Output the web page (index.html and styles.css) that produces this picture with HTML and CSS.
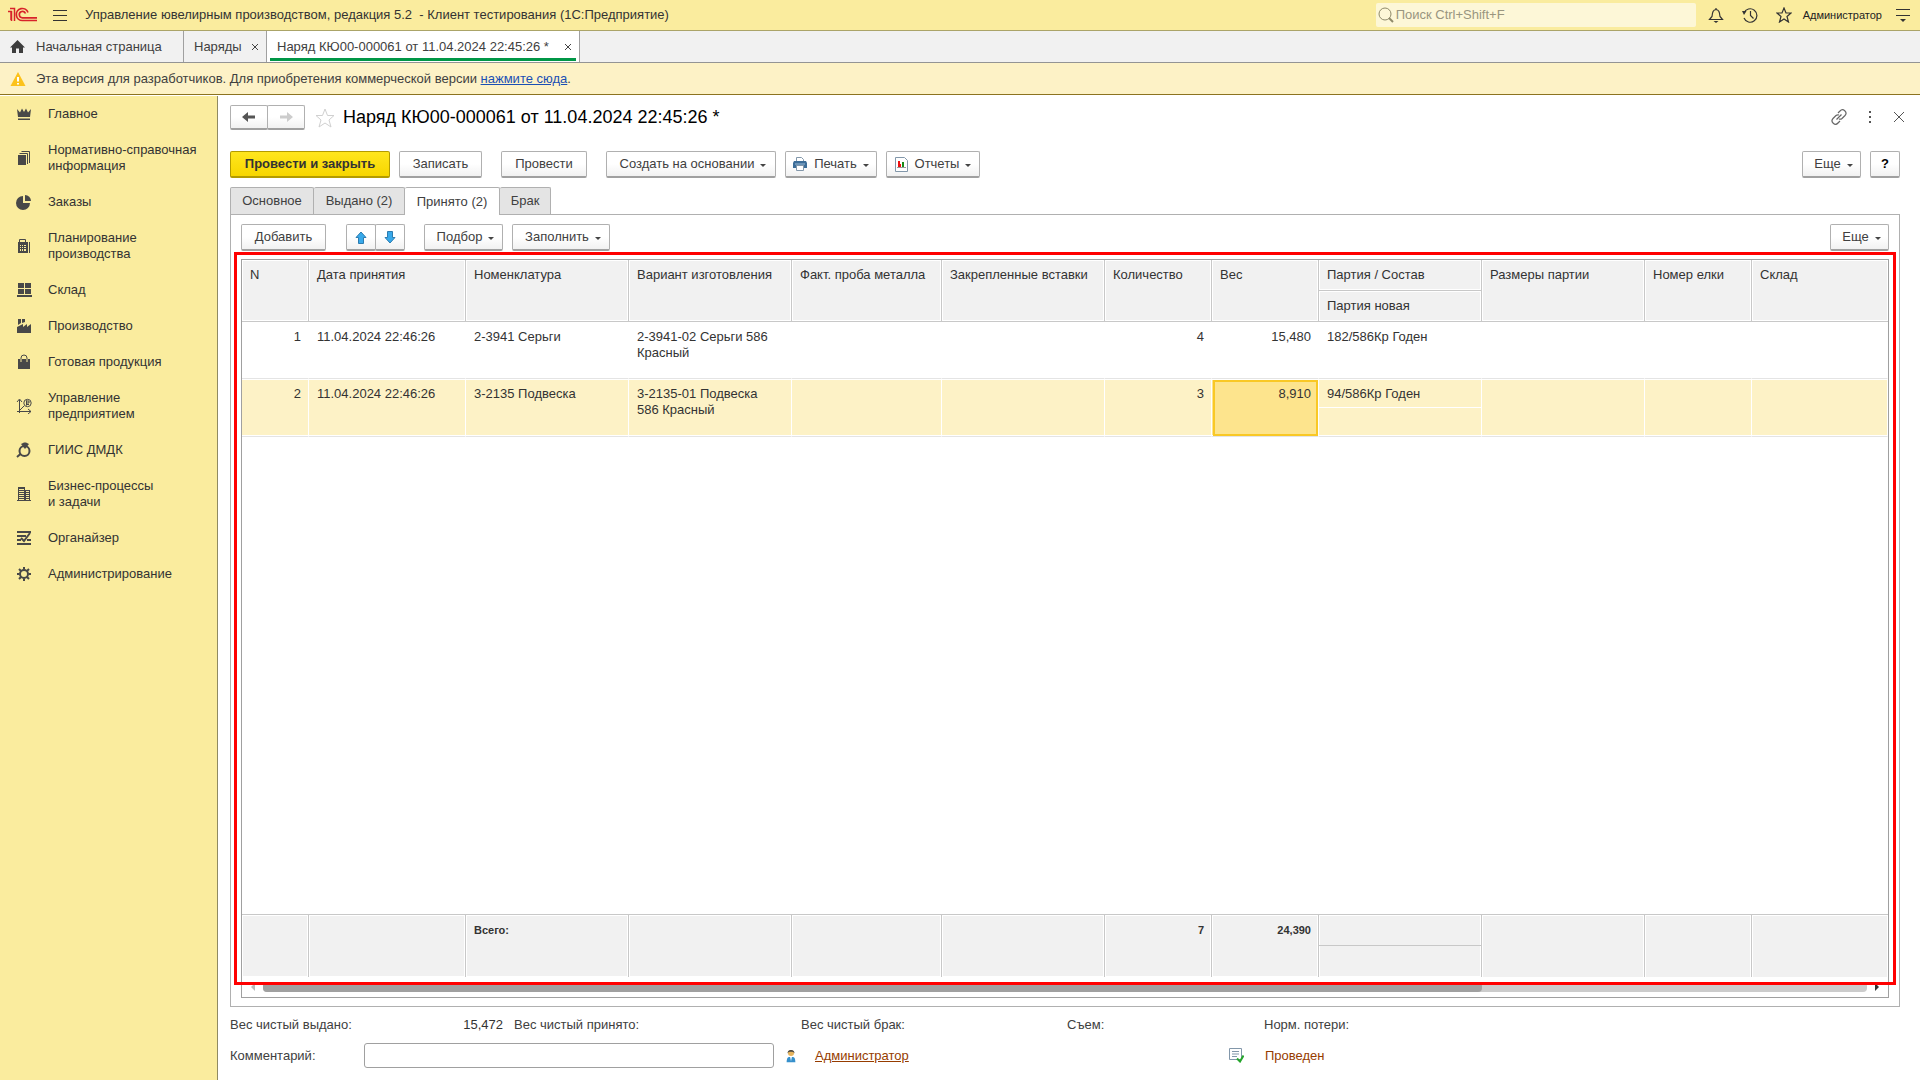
FILE: index.html
```html
<!DOCTYPE html>
<html lang="ru">
<head>
<meta charset="utf-8">
<title>Управление ювелирным производством</title>
<link rel="stylesheet" href="styles.css">
</head>
<body>
<header class="titlebar">
  <svg class="logo" width="30" height="16" viewBox="0 0 30 16" fill="none" stroke="#d8232a"><path d="M0 4.500h3V13M2 1.500h4.500V14M3.500 4v10" stroke-width="1.500"/><path d="M20 5.500A6 6 0 1 0 14.500 13.500H29M17.500 6.500a3.200 3.200 0 1 0-3 4.300H29" stroke-width="1.700"/></svg>
  <button class="icon-btn menu" aria-label="Меню"><svg width="14" height="13" stroke="#333" stroke-width="1"><path d="M0 1.500h14M0 6.500h14M0 11.500h14"/></svg></button>
  <div class="app-name">Управление ювелирным производством, редакция 5.2 &nbsp;- Клиент тестирования (1С:Предприятие)</div>
  <div class="search">
    <svg width="16" height="16" fill="none" stroke="#8f8a6a"><circle cx="7" cy="7" r="6"/><path d="M11 11l4 4" stroke-width="2"/></svg>
    <input type="text" placeholder="Поиск Ctrl+Shift+F" aria-label="Поиск">
  </div>
  <div class="tools">
    <button class="icon-btn" aria-label="Уведомления"><svg width="16" height="16" fill="none" stroke="#333" stroke-width="1.200"><path d="M1.500 12.500h13L12 9.500C11.500 5 11 3 8 2.500 5 3 4.500 5 4 9.500zM8 2.500V1"/><path d="M5.500 14h5L8 16z" fill="#333" stroke="none"/></svg></button>
    <button class="icon-btn" aria-label="История"><svg width="16" height="16" fill="none" stroke="#333" stroke-width="1.200"><path d="M2 6a6.700 6.700 0 1 1 0 5M8.500 4v4.500l3 3"/><path d="M0 4l4.500 0L2 8z" fill="#333" stroke="none"/></svg></button>
    <button class="icon-btn" aria-label="Избранное"><svg width="16" height="16" fill="none" stroke="#333" stroke-width="1.200"><path d="M8 1l2 5h5l-4 3.500 1.500 5.500L8 12l-4.500 3L5 9.500 1 6h5z"/></svg></button>
    <a class="user" href="#">Администратор</a>
    <button class="icon-btn" aria-label="Настройки"><svg width="14" height="14" stroke="#333"><path d="M0 1.500h14M0 7.500h14"/><path d="M4 11h6l-3 3z" fill="#333" stroke="none"/></svg></button>
  </div>
</header>
<nav class="doc-tabs">
  <a class="doc-tab home" href="#"><svg width="15" height="14" fill="#3d3d3d"><path d="M7.500 0L15 7.500H13V13H9V8.500H6V13H2V7.500H0z"/></svg>Начальная страница</a>
  <a class="doc-tab list" href="#">Наряды<svg class="x" width="8" height="8" stroke="#444"><path d="M1 1l6 6M7 1L1 7"/></svg></a>
  <a class="doc-tab active" href="#">Наряд КЮ00-000061 от 11.04.2024 22:45:26 *<svg class="x" width="8" height="8" stroke="#444"><path d="M1 1l6 6M7 1L1 7"/></svg></a>
</nav>
<div class="notice">
  <svg width="16" height="14"><path d="M8 0l7.500 14H.5z" fill="#fcc21b"/><path d="M8 5v4.500M8 11v1.500" stroke="#fff" stroke-width="2"/></svg>
  <p>Эта версия для разработчиков. Для приобретения коммерческой версии <a href="#">нажмите сюда</a>.</p>
</div>
<div class="body">
  <nav class="sidebar">
    <a href="#"><svg width="16" height="16"><path d="M1 3l3 3.500L6 2.500l2 3.500 2-3.500 2 4L15 3l-1 8H2zM2 12.500h12V14H2z"/></svg>Главное</a>
    <a href="#"><svg width="16" height="16"><path d="M2 5h8v10H2z"/><path d="M3.500 3.500h8V14M5.500 1.500h8V13" class="ln"/></svg>Нормативно-справочная информация</a>
    <a href="#"><svg width="16" height="16"><path d="M7 2v7h7A7 7 0 1 1 7 2zM9 1a6 6 0 0 1 6 6H9z"/></svg>Заказы</a>
    <a href="#"><svg width="16" height="16"><path d="M3.500 5V1.500h6V5M13.500 4v11" class="ln"/><path fill-rule="evenodd" d="M2 4h10v11H2zM4 7v1h1V7zM6 7v1h1V7zM8 7v1h2V7zM4 9v1h1V9zM6 9v1h1V9zM8 9v1h2V9zM4 11v2h1v-2zM6 11v2h1v-2zM8 11v2h2v-2z"/></svg>Планирование производства</a>
    <a href="#"><svg width="16" height="16"><path d="M2 1h6v5H2zM9 1h6v5H9zM2 7h6v5H2zM9 7h6v5H9zM1 13h15v2H1z"/></svg>Склад</a>
    <a href="#"><svg width="16" height="16"><path d="M1 15V9l6-3v3l4-3v3l4-3v9zM2 1h3v4l-3 2zM6 1h3v3L6 5z"/></svg>Производство</a>
    <a href="#"><svg width="16" height="16"><path d="M2 5h12v10H2z"/><path d="M5 8V4a3 3 0 0 1 6 0v4" class="ln" style="stroke:#faec9e"/><path d="M5 5V4a3 3 0 0 1 6 0v1" class="ln"/></svg>Готовая продукция</a>
    <a href="#"><svg width="16" height="16"><path d="M3.500 15V2M1 4l2.500-3L6 4M1 13.500h14M12 11l3 2.500-3 2.500M4 12l4-4" class="ln"/><circle cx="11.500" cy="5" r="3.700" class="ln"/><path d="M10.500 2.500v5M10 3h3v2h-3M10 6.500h3" class="ln"/></svg>Управление предприятием</a>
    <a href="#"><svg width="16" height="16"><circle cx="8.500" cy="9" r="5" class="ln bold"/><path d="M5 2l3-1.500h2L13 2 9 7z"/><path d="M1 15l4-3.500" class="ln bold"/></svg>ГИИС ДМДК</a>
    <a href="#"><svg width="16" height="16"><path d="M2 1h7v3h5v10h1v1H1v-1h1z"/><path d="M3 3.500h5M3 5.500h5M3 7.500h5M3 9.500h5M3 11.500h5M3 13.500h5M10 5.500h3M10 7.500h3M10 9.500h3M10 11.500h3M10 13.500h3" class="gap"/></svg>Бизнес-процессы<br>и задачи</a>
    <a href="#"><svg width="16" height="16"><path d="M1 2h14M1 6h9M1 10h4M11 10h4M1 14h14M5 8l3 3 6-8" class="ln bold"/></svg>Органайзер</a>
    <a href="#"><svg width="16" height="16"><circle cx="8" cy="8" r="4" class="ln bold"/><path d="M8 1v2.500M8 12.500V15M1 8h2.500M12.500 8H15M3 3l2 2M11 11l2 2M13 3l-2 2M5 11l-2 2" class="ln bold"/></svg>Администрирование</a>
  </nav>
  <main class="page">
    <div class="page-head">
      <div class="pair">
        <button class="btn nav" aria-label="Назад"><svg width="16" height="12"><path d="M1 6l6-5v3.500h7v3H7V11z" fill="#555"/></svg></button>
        <button class="btn nav" aria-label="Вперед"><svg width="16" height="12"><path d="M15 6L9 1v3.500H2v3h7V11z" fill="#ccc"/></svg></button>
      </div>
      <svg class="fav" width="20" height="20" fill="none" stroke="#d0d0d0"><path d="M10 1l2.500 6.500H19l-5 4.500 2 7-6-4-6 4 2-7-5-4.500h6.500z"/></svg>
      <h1>Наряд КЮ00-000061 от 11.04.2024 22:45:26 *</h1>
      <div class="head-tools">
        <button class="icon-btn" aria-label="Ссылка"><svg width="16" height="16" fill="none" stroke="#666" stroke-width="1.200"><path d="M7 4l2-2a3 3 0 0 1 5 4.500l-3 3a3 3 0 0 1-3 .5M9 12l-2 2a3 3 0 0 1-5-4.500l3-3A3 3 0 0 1 8 6M5.500 10.500l5-5"/></svg></button>
        <button class="icon-btn" aria-label="Действия"><svg width="4" height="12" fill="#555"><path d="M1 0h2v2H1zM1 5h2v2H1zM1 10h2v2H1z"/></svg></button>
        <button class="icon-btn" aria-label="Закрыть"><svg width="12" height="12" stroke="#555"><path d="M1 1l10 10M11 1L1 11"/></svg></button>
      </div>
    </div>
    <div class="commands">
      <button class="btn primary">Провести и закрыть</button>
      <button class="btn save">Записать</button>
      <button class="btn post">Провести</button>
      <button class="btn drop base">Создать на основании<i class="caret"></i></button>
      <button class="btn drop print"><svg width="14" height="16"><path d="M3.500 6V1.500h5l2 2V6" fill="#fff" stroke="#8297aa"/><path d="M1 5h12l1 2v5H0V7z" fill="#3c6d98"/><path d="M2 8h10" stroke="#9dbdd8"/><path d="M3.500 9.500h7v5h-7z" fill="#fff" stroke="#8297aa"/></svg>Печать<i class="caret"></i></button>
      <button class="btn drop reports"><svg width="13" height="15"><path d="M.5.5h9l3 3v11H.5z" fill="#fff" stroke="#8297aa"/><path d="M3 4h2v6H3zM5 7h1v3H5z" fill="#e11"/><path d="M7 5h2v5H7z" fill="#198a19"/><path d="M2 10.500h9" stroke="#999"/></svg>Отчеты<i class="caret"></i></button>
      <button class="btn drop more push">Еще<i class="caret"></i></button>
      <button class="btn help">?</button>
    </div>
    <div class="form-tabs" role="tablist">
      <button role="tab" class="t-main">Основное</button><button role="tab" class="t-out">Выдано (2)</button><button role="tab" class="t-in active" aria-selected="true">Принято (2)</button><button role="tab" class="t-bad">Брак</button>
    </div>
    <section class="panel">
      <div class="panel-tools">
        <button class="btn add">Добавить</button>
        <div class="pair">
          <button class="btn arrow" aria-label="Вверх"><svg width="12" height="13"><path d="M6 1l5 5.500H8.500v6h-5v-6H1z" fill="#38a9ea" stroke="#2c7cb0"/></svg></button>
          <button class="btn arrow" aria-label="Вниз"><svg width="12" height="13"><path d="M6 12L1 6.500h2.500v-6h5v6H11z" fill="#38a9ea" stroke="#2c7cb0"/></svg></button>
        </div>
        <button class="btn drop pick">Подбор<i class="caret"></i></button>
        <button class="btn drop fill">Заполнить<i class="caret"></i></button>
        <button class="btn drop more push">Еще<i class="caret"></i></button>
      </div>
      <div class="grid-box">
        <table>
          <colgroup><col class="c-n"><col class="c-date"><col class="c-l"><col class="c-l"><col class="c-m"><col class="c-l"><col class="c-s"><col class="c-s"><col class="c-l"><col class="c-l"><col class="c-s"><col></colgroup>
          <thead>
            <tr><th rowspan="2">N</th><th rowspan="2">Дата принятия</th><th rowspan="2">Номенклатура</th><th rowspan="2">Вариант изготовления</th><th rowspan="2">Факт. проба металла</th><th rowspan="2">Закрепленные вставки</th><th rowspan="2">Количество</th><th rowspan="2">Вес</th><th>Партия / Состав</th><th rowspan="2">Размеры партии</th><th rowspan="2">Номер елки</th><th rowspan="2">Склад</th></tr>
            <tr><th>Партия новая</th></tr>
          </thead>
          <tbody>
            <tr class="row"><td class="num">1</td><td>11.04.2024 22:46:26</td><td>2-3941 Серьги</td><td>2-3941-02 Серьги 586 Красный</td><td></td><td></td><td class="num">4</td><td class="num">15,480</td><td>182/586Кр Годен</td><td></td><td></td><td></td></tr>
            <tr class="row selected"><td class="num">2</td><td>11.04.2024 22:46:26</td><td>3-2135 Подвеска</td><td>3-2135-01 Подвеска 586 Красный</td><td></td><td></td><td class="num">3</td><td class="num current">8,910</td><td class="split"><div>94/586Кр Годен</div></td><td></td><td></td><td></td></tr>
            <tr class="rest"><td colspan="12"></td></tr>
          </tbody>
          <tfoot>
            <tr><td></td><td></td><td>Всего:</td><td></td><td></td><td></td><td class="num">7</td><td class="num">24,390</td><td class="half"></td><td rowspan="2"></td><td rowspan="2"></td><td rowspan="2"></td></tr>
            <tr><td></td><td></td><td></td><td></td><td></td><td></td><td></td><td></td><td></td></tr>
          </tfoot>
        </table>
        <div class="scroll">
          <svg width="5" height="8" fill="#bbb"><path d="M5 0v8L1 4z"/></svg>
          <div class="track"><div class="thumb"></div></div>
          <svg width="5" height="8" fill="#333"><path d="M0 0v8l4-4z"/></svg>
        </div>
      </div>
      <div class="highlight"></div>
    </section>
    <div class="totals">
      <div>Вес чистый выдано:<output>15,472</output></div><div>Вес чистый принято:</div><div>Вес чистый брак:</div><div>Съем:</div><div>Норм. потери:</div>
    </div>
    <div class="comment">
      <label for="comment">Комментарий:</label>
      <input id="comment" type="text">
      <div class="author"><svg width="10" height="14" viewBox="0 0 10 16"><path d="M0 15c0-4 1-6 3-6h4c2 0 3 2 3 6z" fill="#3690cc"/><path d="M4 9h2l-1 5z" fill="#fff"/><circle cx="5" cy="4.500" r="3.500" fill="#e6b45e"/><path d="M1 5a4 4 0 0 1 8 0C8 3 7 3 5 3S2 3 1 5z" fill="#444"/></svg><a href="#">Администратор</a></div>
      <div class="state"><svg width="15" height="15"><path d="M.5.500h12v11H.5z" fill="#fff" stroke="#8297aa"/><path d="M3 3.500h7M3 6h7M3 8.500h5" stroke="#8297aa"/><path d="M8 10.500l3 3 3.500-6" fill="none" stroke="#25a52c" stroke-width="2"/></svg>Проведен</div>
    </div>
  </main>
</div>
</body>
</html>
```

FILE: styles.css
```css
* { box-sizing: border-box; }
body {
  margin: 0;
  min-height: 100vh;
  display: flex;
  flex-direction: column;
  background: #fff;
  color: #404040;
  font: 13px/16px "Liberation Sans", Arial, sans-serif;
}
button, input { font: inherit; color: inherit; }
svg { flex: none; display: block; }
a { color: inherit; text-decoration: none; }
p, h1 { margin: 0; }
.icon-btn { border: 0; background: none; padding: 0; display: flex; }

/* Window title */
.titlebar {
  display: flex;
  align-items: center;
  height: 31px;
  padding: 0 10px 0 8px;
  background: #faec9e;
  border-bottom: 1px solid #aba468;
}
.menu { margin: 0 18px 0 15px; }
.app-name { flex: 1; color: #333; white-space: nowrap; }
.search {
  display: flex;
  align-items: center;
  width: 320px;
  height: 24px;
  padding: 0 2px;
  border-radius: 2px;
  background: #fdf7d7;
}
.search input { flex: 1; min-width: 0; border: 0; padding: 0 2px; background: none; outline: 0; }
.search input::placeholder { color: #99957f; opacity: 1; }
.tools { display: flex; align-items: center; gap: 18px; padding-left: 12px; }
.user { font-size: 11px; color: #222; margin: 0 -4px 0 -7px; }

/* Open documents */
.doc-tabs { display: flex; height: 32px; background: #f1f1f1; border-bottom: 1px solid #949494; }
.doc-tab { display: flex; align-items: center; padding: 0 7px 0 10px; border-right: 1px solid #a0a0a0; }
.home { gap: 11px; min-width: 184px; }
.list { min-width: 83px; justify-content: space-between; }
.doc-tab.active { min-width: 313px; justify-content: space-between; background: #fff; position: relative; }
.doc-tab.active::after {
  content: "";
  position: absolute;
  left: 3px; right: 3px; bottom: 1px;
  height: 3px;
  background: #009646;
}

.notice {
  display: flex;
  align-items: center;
  gap: 10px;
  height: 32px;
  padding-left: 10px;
  background: #fdf2c6;
  border-bottom: 1px solid #8c7320;
}
.notice a { color: #1a4fb4; text-decoration: underline; }

.body { flex: 1; display: flex; padding-top: 1px; }
.sidebar { width: 218px; flex: none; background: #faec9e; border-right: 1px solid #8f8a62; }
.sidebar a { display: flex; align-items: center; gap: 16px; padding: 10px 16px; color: #333; }
.sidebar svg { fill: #484848; }
.sidebar .ln { fill: none; stroke: #484848; }
.sidebar .gap { stroke: #faec9e; }
.sidebar .bold { stroke-width: 2; }

/* Document form */
.page { flex: 1; min-width: 0; display: flex; flex-direction: column; padding: 9px 20px 12px 12px; }
.page-head { display: flex; align-items: center; height: 25px; }
.pair { display: flex; }
.pair .btn + .btn { margin-left: -1px; }
.fav { margin: 0 8px 0 10px; }
h1 { flex: 1; padding-bottom: 2px; font-size: 18px; line-height: 22px; font-weight: 400; color: #000; }
.head-tools { display: flex; align-items: center; gap: 21px; padding-bottom: 2px; margin-right: -5px; }
.btn {
  display: flex;
  align-items: center;
  justify-content: center;
  height: 27px;
  padding: 0;
  border: 1px solid #b0b0b0;
  border-bottom: 2px solid #a0a0a0;
  border-radius: 2px;
  background: linear-gradient(#fff 50%, #f1f1f1);
  white-space: nowrap;
}
.drop { padding-left: 4px; }
.nav { width: 38px; height: 25px; }
.caret { border: 3px solid transparent; border-top-color: #444; border-bottom: 0; margin: 3px 0 0 6px; }
.commands { display: flex; gap: 9px; margin: 21px 0 9px; }
.primary { width: 160px; font-weight: 700; color: #333; background: linear-gradient(#ffe61e, #f7d600); border-color: #b39b00; }
.save { width: 83px; margin-right: 10px; }
.post { width: 86px; margin-right: 10px; }
.base { width: 170px; }
.print { width: 92px; padding-left: 0; }
.reports { width: 94px; padding-left: 0; }
.print svg, .reports svg { margin-right: 7px; }
.more { width: 59px; }
.push { margin-left: auto; }
.help { width: 30px; font-weight: 700; color: #000; }

.form-tabs { display: flex; }
.form-tabs button {
  height: 27px;
  padding: 0;
  border: 1px solid #b0b0b0;
  border-bottom: 0;
  border-radius: 2px 2px 0 0;
  background: #e4e4e4;
}
.form-tabs button + button { border-left: 0; }
.form-tabs .active { background: #fff; height: 28px; margin-bottom: -1px; z-index: 1; }
.t-main { width: 84px; }
.t-out { width: 91px; }
.t-in { width: 95px; }
.t-bad { width: 51px; }

.panel { flex: 1; display: flex; flex-direction: column; position: relative; border: 1px solid #b0b0b0; padding: 9px 10px 8px; }
.panel-tools { display: flex; margin-bottom: 8px; }
.add { width: 85px; margin-right: 20px; }
.arrow { width: 30px; }
.pick { width: 79px; margin: 0 9px 0 19px; }
.fill { width: 98px; }
.highlight { position: absolute; inset: 37px 3px 21px 3px; border: 3px solid #f00; pointer-events: none; }

.grid-box { flex: 1; display: flex; flex-direction: column; border: 1px solid #a0a0a0; }
table { flex: 1; width: 100%; table-layout: fixed; border-spacing: 0; color: #333; }
.c-n { width: 67px; }
.c-date { width: 157px; }
.c-l { width: 163px; }
.c-m { width: 150px; }
.c-s { width: 107px; }
th, td { padding: 7px 10px 0 8px; vertical-align: top; text-align: left; font-weight: 400; }
th, tfoot td { background: #f1f1f1; border-right: 1px solid #c8c8c8; box-shadow: inset 0 0 0 1px #fff; }
th { height: 31px; border-bottom: 1px solid #c8c8c8; white-space: nowrap; }
th:last-child[rowspan], tfoot td:last-child[rowspan] { border-right: 0; }
.num { text-align: right; padding-right: 7px; }
.row td { height: 57px; border-right: 1px solid #fff; border-bottom: 1px solid #e4e4e4; }
.row.selected td { height: 58px; background: #fdf2c6; box-shadow: inset 0 1px #fff, inset 0 -1px #fff; }
.row.selected td.current { background: #fde48d; outline: 2px solid #f9c825; outline-offset: -3px; }
.row.selected td.split { padding: 0; }
.split div { height: 29px; padding: 7px 8px 0; border-bottom: 1px solid #fff; }
tfoot td { height: 31px; font-size: 11px; font-weight: 700; }
tfoot tr:first-child td { border-top: 1px solid #c8c8c8; box-shadow: inset 1px 1px #fff, inset -1px 0 #fff; }
tfoot tr + tr td { box-shadow: inset 1px 0 #fff, inset -1px -1px #fff; }
tfoot tr:first-child td.half { height: 32px; border-bottom: 1px solid #c8c8c8; }
.scroll { display: flex; align-items: center; gap: 8px; height: 20px; padding: 0 8px 1px; }
.track { flex: 1; height: 10px; border-radius: 4px; background: #ccc; }
.thumb { width: 76%; height: 10px; border-radius: 4px; background: #a0a0a0; }

.totals { display: grid; grid-template-columns: 284px 287px 266px 197px 1fr; margin: 10px 0; }
.totals div { display: flex; justify-content: space-between; padding-right: 11px; }
output { color: #333; }
.comment { display: grid; grid-template-columns: 134px 410px 455px 1fr; align-items: center; }
.comment input { height: 25px; border: 1px solid #a0a0a0; border-radius: 3px; padding: 0 6px; }
.author, .state { display: flex; align-items: center; color: #963c00; }
.author { gap: 19px; padding-left: 12px; }
.author a { text-decoration: underline; }
.state { gap: 21px; }
```
